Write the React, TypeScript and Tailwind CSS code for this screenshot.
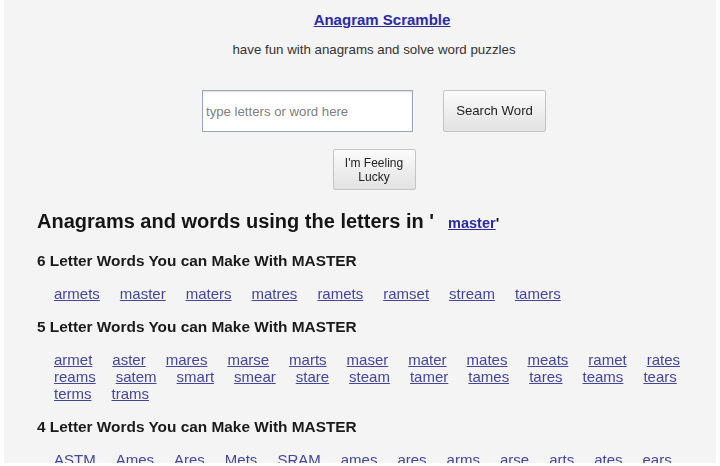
import { useState } from "react";

const sixLetter = ["armets", "master", "maters", "matres", "ramets", "ramset", "stream", "tamers"];

const fiveLetter = [
    "armet", "aster", "mares", "marse", "marts", "maser", "mater", "mates", "meats", "ramet", "rates",
    "reams", "satem", "smart", "smear", "stare", "steam", "tamer", "tames", "tares", "teams", "tears",
    "terms", "trams",
];

const fourLetter = ["ASTM", "Ames", "Ares", "Mets", "SRAM", "ames", "ares", "arms", "arse", "arts", "ates", "ears"];

function WordSection({ count, words }: { count: number; words: string[] }) {
    return (
        <div>
            <h3 className="text-[15.4px] leading-[18px] font-bold text-[#1a1a1a]">
                {count} Letter Words You can Make With MASTER
            </h3>
            <div className="mt-[15px] mb-[16px] pl-[17px] pr-[12px] flex flex-wrap gap-x-5 text-[15px] leading-[17px]">
                {words.map((w) => (
                    <a key={w} href="#" className="text-[#45459c] underline">
                        {w}
                    </a>
                ))}
            </div>
        </div>
    );
}

export default function App() {
    const [query, setQuery] = useState("");

    return (
        <div className="h-screen overflow-hidden bg-white px-[4px] pb-[3px]" style={{ fontFamily: '"Liberation Sans", Arial, sans-serif' }}>
            <div className="h-full overflow-hidden bg-[#f4f4f4]">
                {/* header and search */}
                <div className="pl-[28px] pt-[11px] flex flex-col items-center">
                    <a href="#" className="pl-[16px] text-[15px] leading-[18px] font-bold text-[#2a2aa8] underline">
                        Anagram Scramble
                    </a>
                    <p className="mt-[13px] text-[13.3px] leading-[16px] text-[#333]">
                        have fun with anagrams and solve word puzzles
                    </p>
                    <div className="mt-[32px] flex items-center gap-[30px]">
                        <input
                            type="text"
                            autoFocus
                            value={query}
                            onChange={(e) => setQuery(e.target.value)}
                            placeholder="type letters or word here"
                            className="w-[211px] h-[42px] bg-white border border-[#9ea6b6] px-[3px] text-[13.2px] text-[#222] placeholder:text-[#808080] outline-none shadow-[inset_0_1px_2px_rgba(0,0,0,0.12)]"
                        />
                        <button className="w-[103px] h-[42px] rounded-[2px] border border-[#c4c4c4] bg-gradient-to-b from-[#fbfbfb] to-[#e2e2e2] text-[13.2px] text-[#222]">
                            Search Word
                        </button>
                    </div>
                    <button className="mt-[17px] w-[83px] h-[41px] rounded-[2px] border border-[#c4c4c4] bg-gradient-to-b from-[#fbfbfb] to-[#e2e2e2] text-[12px] leading-[14px] text-[#222]">
                        I'm Feeling
                        <br />
                        Lucky
                    </button>
                </div>

                {/* results */}
                <div className="pl-[33px] mt-[20px]">
                    <h2 className="text-[20px] leading-[23px] font-bold text-[#151515]">
                        Anagrams and words using the letters in '
                        <a href="#" className="ml-[14px] text-[14.5px] text-[#2a2aa8] underline">master</a>
                        <span className="text-[15px]">'</span>
                    </h2>
                    <div className="mt-[17px]">
                        <WordSection count={6} words={sixLetter} />
                        <WordSection count={5} words={fiveLetter} />
                        <WordSection count={4} words={fourLetter} />
                    </div>
                </div>
            </div>
        </div>
    );
}
